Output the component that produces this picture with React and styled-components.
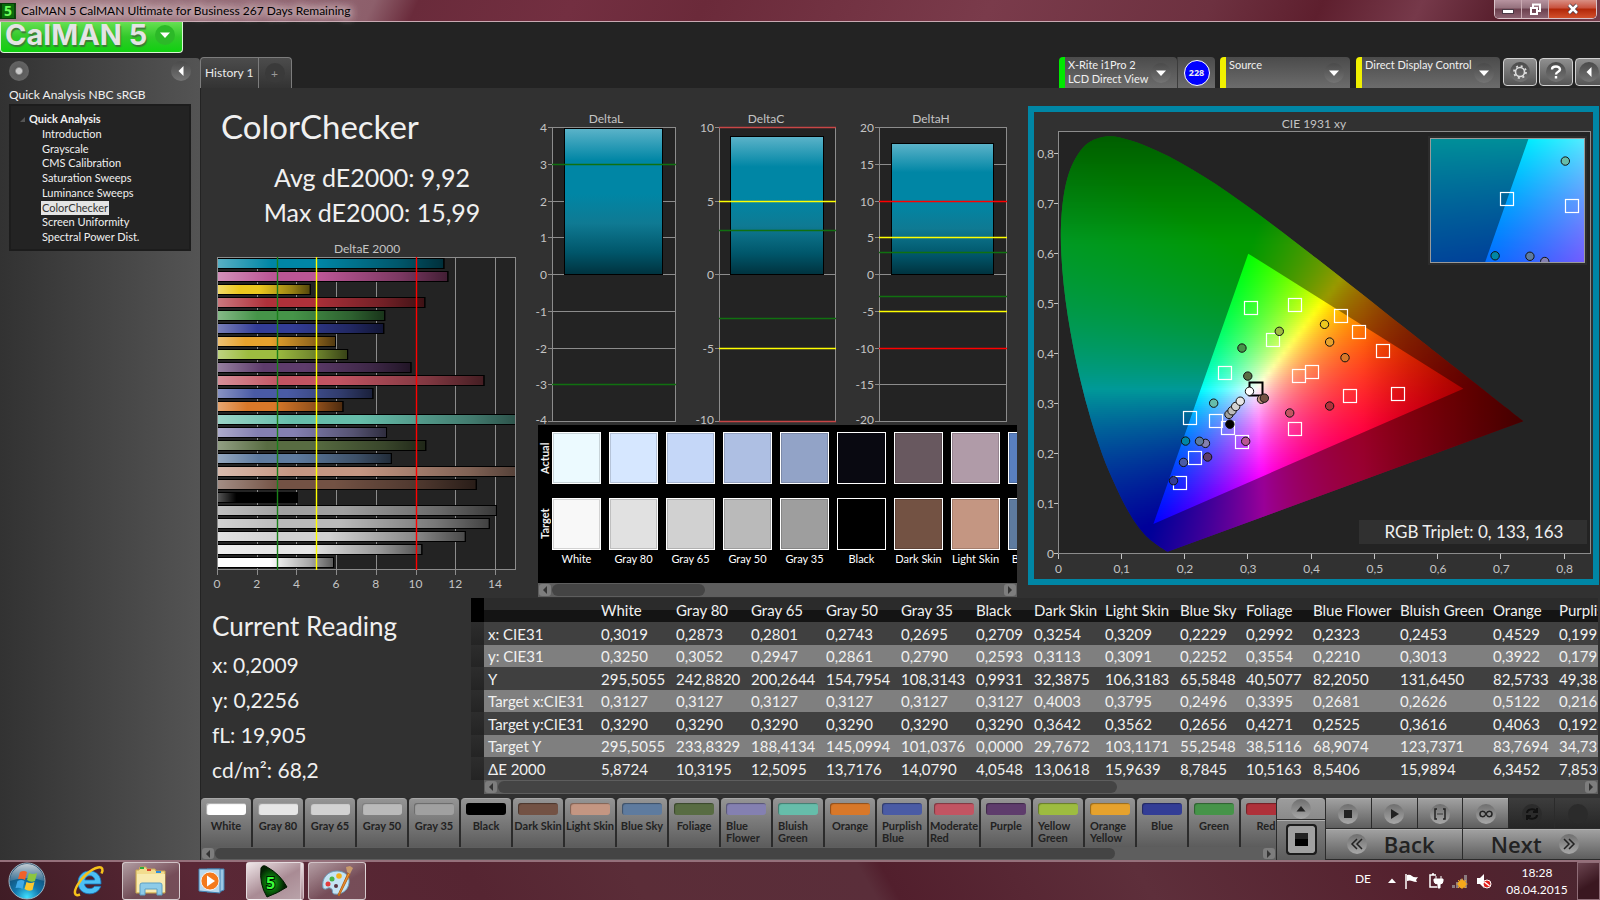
import { useId } from 'react';
import styled, { createGlobalStyle, css } from 'styled-components';

const GlobalStyle = createGlobalStyle`
  * {
    box-sizing: border-box;
  }

  body {
    margin: 0;
    background: #232323;
    color: #f0f0f0;
    font-family: Lato, 'Open Sans', sans-serif;
    font-size: 12px;
  }

  button {
    font: inherit;
    color: inherit;
    padding: 0;
    border: 0;
    background: none;
  }

  h1, h2, p, ul, dl {
    margin: 0;
    padding: 0;
    font-weight: 400;
  }

  ul {
    list-style: none;
  }
`;

/* ---------- data ---------- */

const patches = [
  { name: 'White', color: '#ffffff', dE: 5.8724, x: 0.3019, y: 0.325, tx: 0.3127, ty: 0.329 },
  { name: 'Gray 80', color: '#e6e6e6', dE: 10.3195, x: 0.2873, y: 0.3052 },
  { name: 'Gray 65', color: '#d2d2d2', dE: 12.5095, x: 0.2801, y: 0.2947 },
  { name: 'Gray 50', color: '#bababa', dE: 13.7176, x: 0.2743, y: 0.2861 },
  { name: 'Gray 35', color: '#a0a0a0', dE: 14.079, x: 0.2695, y: 0.279 },
  { name: 'Black', color: '#000000', dE: 4.0548, x: 0.2709, y: 0.2593 },
  { name: 'Dark Skin', color: '#735244', dE: 13.0618, x: 0.3254, y: 0.3113, tx: 0.4003, ty: 0.3642 },
  { name: 'Light Skin', color: '#c49682', dE: 15.9639, x: 0.3209, y: 0.3091, tx: 0.3795, ty: 0.3562 },
  { name: 'Blue Sky', color: '#5e7b9f', dE: 8.7845, x: 0.2229, y: 0.2252, tx: 0.2496, ty: 0.2656 },
  { name: 'Foliage', color: '#586c42', dE: 10.5163, x: 0.2992, y: 0.3554, tx: 0.3395, ty: 0.4271 },
  { name: 'Blue Flower', color: '#8480b1', dE: 8.5406, x: 0.2323, y: 0.221, tx: 0.2681, ty: 0.2525 },
  { name: 'Bluish Green', color: '#66bdaa', dE: 15.9894, x: 0.2453, y: 0.3013, tx: 0.2626, ty: 0.3616 },
  { name: 'Orange', color: '#d97829', dE: 6.3452, x: 0.4529, y: 0.3922, tx: 0.5122, ty: 0.4063 },
  { name: 'Purplish Blue', color: '#4a5ba5', dE: 7.853, x: 0.1976, y: 0.183, tx: 0.216, ty: 0.192 },
  { name: 'Moderate Red', color: '#c25462', dE: 13.45, x: 0.3655, y: 0.2817, tx: 0.4614, ty: 0.315 },
  { name: 'Purple', color: '#5e3c6c', dE: 9.77, x: 0.2357, y: 0.1937, tx: 0.29, ty: 0.2231 },
  { name: 'Yellow Green', color: '#9dbc40', dE: 6.58, x: 0.349, y: 0.4448, tx: 0.3743, ty: 0.4974 },
  { name: 'Orange Yellow', color: '#e6a22d', dE: 5.97, x: 0.4286, y: 0.4234, tx: 0.4743, ty: 0.4429 },
  { name: 'Blue', color: '#333d96', dE: 8.4, x: 0.1818, y: 0.1464, tx: 0.1924, ty: 0.1418 },
  { name: 'Green', color: '#469449', dE: 8.45, x: 0.29, y: 0.4114, tx: 0.3041, ty: 0.4915 },
  { name: 'Red', color: '#af313a', dE: 10.47, x: 0.4286, y: 0.2956, tx: 0.5362, ty: 0.3203 },
  { name: 'Yellow', color: '#ecc81f', dE: 4.7, x: 0.4205, y: 0.4588, tx: 0.4467, ty: 0.4755 },
  { name: 'Magenta', color: '#bb5695', dE: 11.63, x: 0.2959, y: 0.2251, tx: 0.3731, ty: 0.2491 },
  { name: 'Cyan', color: '#0086a5', dE: 11.43, x: 0.2009, y: 0.2256, tx: 0.2085, ty: 0.271 },
];

const actualColors = ['#ecfaff', '#d6e7ff', '#c5d7f8', '#aebfe3', '#92a3c7', '#090911', '#68585f', '#b09ba8', '#5a80c0'];
const targetColors = ['#f8f8f8', '#e1e1e1', '#d1d1d1', '#bababa', '#9e9e9e', '#000000', '#735243', '#c49682', '#5e7b9f'];

const columns = [
  { name: 'White', width: 75, values: ['0,3019', '0,3250', '295,5055', '0,3127', '0,3290', '295,5055', '5,8724'] },
  { name: 'Gray 80', width: 75, values: ['0,2873', '0,3052', '242,8820', '0,3127', '0,3290', '233,8329', '10,3195'] },
  { name: 'Gray 65', width: 75, values: ['0,2801', '0,2947', '200,2644', '0,3127', '0,3290', '188,4134', '12,5095'] },
  { name: 'Gray 50', width: 75, values: ['0,2743', '0,2861', '154,7954', '0,3127', '0,3290', '145,0994', '13,7176'] },
  { name: 'Gray 35', width: 75, values: ['0,2695', '0,2790', '108,3143', '0,3127', '0,3290', '101,0376', '14,0790'] },
  { name: 'Black', width: 58, values: ['0,2709', '0,2593', '0,9931', '0,3127', '0,3290', '0,0000', '4,0548'] },
  { name: 'Dark Skin', width: 71, values: ['0,3254', '0,3113', '32,3875', '0,4003', '0,3642', '29,7672', '13,0618'] },
  { name: 'Light Skin', width: 75, values: ['0,3209', '0,3091', '106,3183', '0,3795', '0,3562', '103,1171', '15,9639'] },
  { name: 'Blue Sky', width: 66, values: ['0,2229', '0,2252', '65,5848', '0,2496', '0,2656', '55,2548', '8,7845'] },
  { name: 'Foliage', width: 67, values: ['0,2992', '0,3554', '40,5077', '0,3395', '0,4271', '38,5116', '10,5163'] },
  { name: 'Blue Flower', width: 87, values: ['0,2323', '0,2210', '82,2050', '0,2681', '0,2525', '68,9074', '8,5406'] },
  { name: 'Bluish Green', width: 93, values: ['0,2453', '0,3013', '131,6450', '0,2626', '0,3616', '123,7371', '15,9894'] },
  { name: 'Orange', width: 66, values: ['0,4529', '0,3922', '82,5733', '0,5122', '0,4063', '83,7694', '6,3452'] },
  { name: 'Purplish Blue', width: 100, values: ['0,1992', '0,1791', '49,3845', '0,2163', '0,1923', '34,7321', '7,8530'] },
];

const rowLabels = ['x: CIE31', 'y: CIE31', 'Y', 'Target x:CIE31', 'Target y:CIE31', 'Target Y', 'ΔE 2000'];

const treeItems = [
  'Introduction',
  'Grayscale',
  'CMS Calibration',
  'Saturation Sweeps',
  'Luminance Sweeps',
  'ColorChecker',
  'Screen Uniformity',
  'Spectral Power Dist.',
];

/* ---------- window frame ---------- */

const Window = styled.div`
  display: flex;
  flex-direction: column;
  min-height: 100vh;
  overflow: hidden;
`;

const TitleBar = styled.header`
  height: 22px;
  display: flex;
  align-items: center;
  gap: 5px;
  border-bottom: 1px solid #c9a9b2;
  background: linear-gradient(115deg, #a58089 0, #8d5f6b 340px, #6a2b3b 380px, #732f41 520px, #6b2a3a 640px, #7a3b4b 900px,
    #6d3140 1100px, #5e1f2e 1200px, #76394a 1290px, #561d2b 1370px, #7a4452 1480px, #5f2c38 1600px);
  color: #000;
`;

const WindowTitle = styled.span`
  font-size: 12px;
  line-height: 20px;
  flex: 1;
  text-shadow: 0 0 8px #e9dadd, 0 0 8px #e9dadd, 0 0 12px #e9dadd;
`;

const WindowControls = styled.div`
  display: flex;
  align-self: flex-start;
  height: 19px;
  margin-right: 3px;
  border: 1px solid #d9c3c9;
  border-top: 0;
  border-radius: 0 0 5px 5px;
  overflow: hidden;
`;

const WindowButton = styled.button`
  width: ${({ $close }) => ($close ? 47 : 27)}px;
  display: grid;
  place-items: center;
  border-right: ${({ $close }) => ($close ? 0 : '1px solid #c9aab2')};
  background: ${({ $close }) =>
    $close
      ? 'linear-gradient(#d98f84, #c8503c 45%, #b12608 50%, #d2502c)'
      : 'linear-gradient(#b794a0, #94707c 45%, #6b3f4d 50%, #8d6472)'};
`;

const Workspace = styled.main`
  flex: 1;
  display: grid;
  grid-template-columns: 200px minmax(0, 1fr);
`;

const Side = styled.div`
  display: flex;
  flex-direction: column;
  gap: 5px;
`;

const LogoButton = styled.button`
  width: 183px;
  height: 31px;
  padding: 0 7px 4px 4px;
  display: flex;
  align-items: center;
  justify-content: space-between;
  border: 1px solid #d9f5d4;
  border-top: 0;
  border-radius: 0 0 4px 4px;
  background: linear-gradient(#66e052, #32c92a 50%, #10d010);
`;

const LogoText = styled.span`
  font-family: Inter, sans-serif;
  font-size: 29px;
  line-height: 26px;
  font-weight: 700;
  color: #e4e4e4;
  text-shadow: 1px 2px 1px #3c7a38;
`;

const SidePanel = styled.aside`
  flex: 1;
  padding: 3px 9px;
  border-radius: 0 4px 0 0;
  background: linear-gradient(90deg, #323232, #545454);
`;

const SideTools = styled.div`
  display: flex;
  justify-content: space-between;
`;

const RoundButton = styled.button`
  width: 20px;
  height: 20px;
  flex: none;
  display: grid;
  place-items: center;
  border-radius: 50%;
  background: ${({ $tone }) => $tone || 'linear-gradient(#4a4a4a, #747474)'};
`;

const WorkflowTitle = styled.h2`
  margin-top: 4px;
  font-size: 12px;
  line-height: 20px;
`;

const Tree = styled.nav`
  height: 147px;
  margin-top: -1px;
  padding: 5px 0 0 9px;
  border: 2px solid #1c1c1c;
  background: #232323;
  font-size: 11px;
`;

const TreeRoot = styled.div`
  display: flex;
  align-items: center;
  gap: 4px;
  line-height: 16px;
  font-weight: 700;
`;

const TreeList = styled.ul`
  height: 117px;
  padding-left: 21px;
  display: flex;
  flex-direction: column;
  justify-content: space-between;
`;

const TreeLink = styled.a`
  display: inline-block;
  padding: 0 1px;
  line-height: 14px;
  text-decoration: none;
  color: ${({ $active }) => ($active ? '#333' : '#f0f0f0')};
  background: ${({ $active }) => ($active ? '#e4e4e4' : 'none')};
`;

/* ---------- top strip ---------- */

const Stage = styled.div`
  display: flex;
  flex-direction: column;
  min-width: 0;
`;

const TopStrip = styled.div`
  height: 66px;
  display: flex;
  align-items: flex-end;
  justify-content: space-between;
  overflow: hidden;
`;

const Tabs = styled.div`
  display: flex;
  height: 31px;
  border: 1px solid #7c7c7c;
  border-bottom: 0;
  border-radius: 4px 4px 0 0;
  background: linear-gradient(#4c4c4c, #333);
`;

const Tab = styled.button`
  padding: 0 4px 2px;
  border-right: 1px solid #7c7c7c;
  font-size: 12px;
  color: #eaeaea;
`;

const AddTab = styled.button`
  width: 32px;
  display: grid;
  place-items: center;
  color: #999;
`;

const Devices = styled.div`
  display: flex;
  align-items: flex-end;
  margin-right: -11px;
`;

const DeviceButton = styled.button`
  width: ${({ $width }) => $width}px;
  height: 31px;
  margin-right: ${({ $gap }) => $gap}px;
  padding: 0 6px 0 3px;
  display: flex;
  align-items: center;
  justify-content: space-between;
  border-left: 6px solid ${({ $mark }) => $mark};
  border-radius: 4px 4px 0 0;
  background: linear-gradient(#4b4b4b, #6c6c6c);
  text-align: left;
  line-height: 14px;
  font-size: 11px;
`;

const DeviceName = styled.span`
  align-self: flex-start;
  padding-top: 1px;
  white-space: nowrap;
`;

const Meter = styled.div`
  width: 38px;
  height: 31px;
  margin: 0 5px 0 0;
  display: grid;
  place-items: center;
  border-left: 1px solid #3c3c3c;
  border-radius: 0 4px 0 0;
  background: linear-gradient(#4b4b4b, #6c6c6c);
`;

const MeterCount = styled.span`
  width: 26px;
  height: 26px;
  display: grid;
  place-items: center;
  border: 1px solid #fff;
  border-radius: 50%;
  background: #00f;
  font: 700 9px 'Open Sans', sans-serif;
`;

const SquareButton = styled.button`
  width: 34px;
  height: 28px;
  margin: 0 2px 2px 0;
  padding-right: ${({ $cut }) => ($cut ? 6 : 0)}px;
  flex: none;
  display: grid;
  place-items: center;
  border: 1px solid #d0d0d0;
  border-radius: 4px;
  background: linear-gradient(#8f8f8f, #555);
`;

/* ---------- content ---------- */

const Content = styled.div`
  flex: 1;
  display: flex;
  flex-direction: column;
  border-left: 1px solid #232323;
  background: #313131;
  min-width: 0;
`;

const Upper = styled.div`
  display: grid;
  grid-template-columns: minmax(0, 324fr) minmax(0, 503fr) minmax(0, 572fr);
  align-items: start;
  min-height: 510px;
`;

const Summary = styled.section`
  padding-top: 16px;
`;

const PageTitle = styled.h1`
  padding-left: 20px;
  font-size: 33px;
  line-height: 44px;
`;

const Stats = styled.div`
  margin: 12px 0 8px;
  padding-left: 18px;
  text-align: center;
  font-size: 25px;
  line-height: 35px;
`;

const Chart = styled.svg`
  display: block;
  width: 100%;
  height: auto;
  overflow: visible;
  font-size: 12px;
  fill: #c4c4c4;
`;

const Middle = styled.section`
  padding-top: 22px;
`;

const DeltaRow = styled.div`
  display: grid;
  grid-template-columns: minmax(0, 160fr) minmax(0, 160fr) minmax(0, 170fr);
  padding: 0 8px 0 5px;
`;

const SwatchPanel = styled.div`
  margin: 0 11px 0 13px;
  overflow: hidden;
`;

const SwatchArea = styled.div`
  height: 158px;
  padding-top: 7px;
  display: flex;
  flex-direction: column;
  gap: 14px;
  background: #000;
`;

const SwatchRow = styled.div`
  display: flex;
  gap: 8px;
`;

const RowName = styled.span`
  width: 14px;
  height: 52px;
  margin-right: -8px;
  flex: none;
  writing-mode: vertical-rl;
  transform: rotate(180deg);
  text-align: center;
  line-height: 14px;
  font-size: 11px;
  font-weight: 700;
`;

const SwatchCell = styled.figure`
  width: 49px;
  margin: 0;
  flex: none;
  display: flex;
  flex-direction: column;
  align-items: center;
`;

const Swatch = styled.div`
  width: 49px;
  height: 52px;
  flex: none;
  border: 1px solid #fff;
  box-shadow: inset 0 0 0 1px rgba(0, 0, 0, 0.15);
  background: ${({ $color }) => $color};
`;

const SwatchLabel = styled.figcaption`
  font-size: 11px;
  line-height: 17px;
  white-space: nowrap;
  color: #fff;
`;

const ScrollTrack = styled.div`
  height: ${({ $height }) => $height}px;
  padding: 1px;
  display: flex;
  background: #5e5e5e;
`;

const ScrollArrow = styled.button`
  width: 12px;
  flex: none;
  display: grid;
  place-items: center;
  border-radius: 3px;
  background: #7d7d7d;
`;

const ScrollLane = styled.div`
  flex: 1;
  margin: 0 1px;
`;

const ScrollThumb = styled.div`
  width: ${({ $size }) => $size}%;
  height: 100%;
  border-radius: 6px;
  background: #444;
`;

const CiePanel = styled.section`
  margin: 18px 1px 0 0;
  border: 6px solid #0086a5;
`;

/* ---------- readings + table ---------- */

const Lower = styled.div`
  display: grid;
  grid-template-columns: minmax(0, 270fr) minmax(0, 1129fr);
  min-height: 200px;
`;

const Reading = styled.section`
  padding: 8px 0 0 11px;
  font-size: 21px;
  line-height: 35px;
`;

const ReadingTitle = styled.h2`
  font-size: 26px;
  line-height: 41px;
`;

const TableBox = styled.div`
  margin-right: 2px;
  overflow: hidden;
`;

const Table = styled.table`
  width: 1172px;
  table-layout: fixed;
  border-collapse: collapse;
  text-align: left;
  font-size: 15px;

  th, td {
    padding: 0 0 0 4px;
    font-weight: 400;
    white-space: nowrap;
  }

  thead th {
    height: 24px;
    background: linear-gradient(#2b2b2b 50%, #141414 52%);
  }

  tbody tr {
    height: 23px;
    background: #404040;
  }

  tbody tr:nth-child(even) {
    height: 22px;
    background: #7f7f7f;
  }

  tbody td:first-child {
    padding: 0;
    background: linear-gradient(#2d2d2d, #242424);
  }

  thead th:first-child {
    background: #000;
  }
`;

const TableScroll = styled.div`
  padding-left: 13px;
`;

/* ---------- bottom strip ---------- */

const BottomStrip = styled.div`
  height: 62px;
  display: flex;
  background: #2b2b2b;
`;

const PatchArea = styled.div`
  flex: 1;
  min-width: 0;
  overflow: hidden;
`;

const PatchRow = styled.div`
  display: flex;
  gap: 2px;
  overflow: hidden;
`;

const PatchButton = styled.button`
  width: 50px;
  height: 49px;
  flex: none;
  padding-top: 4px;
  display: flex;
  flex-direction: column;
  align-items: center;
  justify-content: flex-start;
  gap: 5px;
  border-top: 1px solid #a8a8a8;
  border-radius: 4px 4px 0 0;
  background: linear-gradient(#949494, #5c5c5c);
  color: #222;
  font-size: 11px;
  font-weight: 700;
  line-height: 12px;
  text-align: left;
`;

const Chip = styled.span`
  width: 40px;
  height: 12px;
  flex: none;
  border-radius: 3px;
  background: ${({ $color }) => $color};
  box-shadow: inset 1px 1px 1px rgba(0, 0, 0, 0.35);
`;

const PatchName = styled.span`
  max-width: ${({ $wide }) => ($wide ? '50px' : '40px')};
  white-space: ${({ $wide }) => ($wide ? 'pre-line' : 'normal')};
`;

const controlFace = css`
  display: flex;
  align-items: center;
  justify-content: center;
  border-top: 1px solid #b0b0b0;
  background: linear-gradient(#a0a0a0, #5e5e5e);
  color: #222;
`;

const PatternColumn = styled.div`
  width: 48px;
  margin: 0 1px;
  display: flex;
  flex-direction: column;
  gap: 1px;
`;

const PatternButton = styled.button`
  ${controlFace}
  flex: ${({ $tall }) => ($tall ? 'none' : 1)};
  height: ${({ $tall }) => ($tall ? '43px' : 'auto')};
  padding-bottom: ${({ $tall }) => ($tall ? 5 : 0)}px;
  border-radius: ${({ $tall }) => ($tall ? '0 0 4px 4px' : '4px 4px 0 0')};
  background: ${({ $tall }) => ($tall ? 'linear-gradient(#808080, #5a5a5a)' : 'linear-gradient(#9c9c9c, #8a8a8a)')};
`;

const PatternIcon = styled.span`
  width: 31px;
  height: 31px;
  border: 2px solid #1c1c1c;
  border-radius: 4px;
  box-shadow: inset 0 0 0 7px #a0a0a0;
  background: linear-gradient(#222 50%, #000 50%);
`;

const Controls = styled.div`
  width: 274px;
  display: grid;
  grid-template-columns: repeat(6, 1fr);
  grid-template-rows: 30px 30px;
  gap: 1px;
`;

const ControlButton = styled.button`
  ${controlFace}
  ${({ disabled }) => disabled && 'background: linear-gradient(#3c3c3c, #262626); border-top-color: #3c3c3c;'}
`;

const NavButton = styled.button`
  ${controlFace}
  grid-column: span 3;
  gap: 17px;
  padding: ${({ $side }) => ($side === 'left' ? '0 7px 2px 0' : '0 0 2px 6px')};
  font: 600 22px 'Open Sans', sans-serif;
`;

/* ---------- taskbar ---------- */

const Taskbar = styled.footer`
  height: 40px;
  display: flex;
  align-items: center;
  border-top: 2px solid #95707b;
  background: linear-gradient(60deg, #3f1c25, #5a2836 180px, #562532 420px, #5b2d38 560px, #5a2e3a 760px, #521f2d 780px,
    #5e2f3b 1000px, #54212e 1240px, #4c2630 1380px, #3a1720 1600px);
`;

const TaskSlot = styled.button`
  width: ${({ $width }) => $width}px;
  height: 38px;
  margin-right: ${({ $gap = 0 }) => $gap}px;
  display: grid;
  place-items: center;
  ${({ $open }) => $open && css`
    border: 1px solid rgba(255, 255, 255, 0.65);
    border-radius: 3px;
    background: linear-gradient(150deg, rgba(255, 255, 255, 0.55), rgba(255, 255, 255, 0.18) 60%);
  `}
  ${({ $active }) => $active && css`
    border-right: 4px double #d5c0c6;
    background: linear-gradient(150deg, #efe6e8, #a98b94 55%, #b9a2a9);
  `}
`;

const Tray = styled.div`
  margin-left: auto;
  height: 38px;
  display: flex;
  align-items: center;
  gap: 8px;
  font-size: 12px;
  color: #fff;
`;

const Language = styled.span`
  margin: -6px 9px 0 0;
`;

const Clock = styled.time`
  width: 64px;
  margin-left: 5px;
  text-align: center;
  line-height: 17px;
`;

const ShowDesktop = styled.button`
  width: 23px;
  height: 38px;
  border: 1px solid #8f6d77;
  background: linear-gradient(150deg, #6b4550, #3a1720 60%);
`;

/* ---------- small parts ---------- */

const Triangle = ({ dir = 'down', size = 10, color = '#fff' }) => {
  const paths = { down: 'M0 2.5h10L5 8z', left: 'M7.5 0v10L2.5 5z', right: 'M2.5 0v10L7.5 5z', up: 'M0 7.5h10L5 2z' };
  return (
    <svg width={size} height={size} viewBox="0 0 10 10" aria-hidden="true">
      <path d={paths[dir]} fill={color} />
    </svg>
  );
};

const ScrollBar = ({ size, height }) => (
  <ScrollTrack $height={height}>
    <ScrollArrow aria-label="Scroll left"><Triangle dir="left" size={8} color="#333" /></ScrollArrow>
    <ScrollLane><ScrollThumb $size={size} /></ScrollLane>
    <ScrollArrow aria-label="Scroll right"><Triangle dir="right" size={8} color="#333" /></ScrollArrow>
  </ScrollTrack>
);

/* ---------- charts ---------- */

const DeltaEChart = () => {
  const left = 16;
  const right = 314;
  const top = 19;
  const bottom = 332;
  const unit = 19.85;
  const ticks = [0, 2, 4, 6, 8, 10, 12, 14];
  const limits = [[3, '#1a801a'], [5, '#ffff00'], [10, '#ff0000']];

  return (
    <Chart viewBox="0 0 324 359" role="img" aria-label="DeltaE 2000">
      <defs>
        <linearGradient id="gloss-x">
          <stop offset="0" stopColor="#fff" stopOpacity="0.35" />
          <stop offset="0.24" stopColor="#fff" stopOpacity="0" />
        </linearGradient>
        <linearGradient id="shade-x">
          <stop offset="0.45" stopColor="#000" stopOpacity="0" />
          <stop offset="0.8" stopColor="#000" stopOpacity="0.35" />
          <stop offset="1" stopColor="#000" stopOpacity="0.65" />
        </linearGradient>
        <clipPath id="de-plot"><rect x={left} y={top} width={right - left} height={bottom - top} /></clipPath>
      </defs>
      <text x="166" y="15" textAnchor="middle">DeltaE 2000</text>
      <rect x={left} y={top} width={right - left} height={bottom - top} fill="#232323" />
      {ticks.map((t) => (
        <g key={t}>
          <path d={`M${Math.round(left + t * unit) + 0.5} ${top}V${bottom + 5}`} stroke="#8c8c8c" />
          <text x={left + t * unit} y={bottom + 18} textAnchor="middle">{t}</text>
        </g>
      ))}
      <g clipPath="url(#de-plot)">
        {[...patches].reverse().map((p, i) => {
          const box = { x: left, y: top + 1.5 + i * 13, width: p.dE * unit, height: 10 };
          return (
            <g key={p.name}>
              <rect {...box} fill={p.color} stroke="#000" />
              <rect {...box} fill="url(#gloss-x)" />
              <rect {...box} fill="url(#shade-x)" stroke="#000" />
            </g>
          );
        })}
      </g>
      <rect x={left + 0.5} y={top + 0.5} width={right - left} height={bottom - top - 1} fill="none" stroke="#8c8c8c" />
      {limits.map(([v, color]) => (
        <path key={v} d={`M${Math.round(left + v * unit) + 0.5} ${top}V${bottom}`} stroke={color} strokeWidth="1.4" />
      ))}
    </Chart>
  );
};

const DeltaChart = ({ title, titleX, width, left, right, barInset, max, step, value, limits }) => {
  const zero = 164.5;
  const scale = 147 / max;
  const toY = (v) => Math.round(zero - v * scale - 0.5) + 0.5;
  const ticks = [];
  for (let v = max; v >= -max; v -= step) ticks.push(v);
  const bar = { x: left + barInset - 0.5, y: toY(value), width: right - left - barInset * 2, height: zero - toY(value) };
  const id = useId();

  return (
    <Chart viewBox={`0 0 ${width} 315`} role="img" aria-label={title}>
      <defs>
        <linearGradient id={id} x2="0" y2="1">
          <stop offset="0" stopColor="#5cb3c9" />
          <stop offset="0.22" stopColor="#0086a5" />
          <stop offset="0.45" stopColor="#0086a5" />
          <stop offset="0.65" stopColor="#0f7a93" />
          <stop offset="0.85" stopColor="#00566a" />
          <stop offset="1" stopColor="#00323e" />
        </linearGradient>
      </defs>
      <text x={titleX} y="13" textAnchor="middle">{title}</text>
      <rect x={left} y={toY(max)} width={right - left} height="294" fill="#232323" />
      {ticks.map((v) => (
        <g key={v}>
          <path d={`M${left - 4} ${toY(v)}H${right}`} stroke="#8c8c8c" />
          <text x={left - 5} y={Math.min(Math.round(toY(v)) + 4, 314)} textAnchor="end">{v}</text>
        </g>
      ))}
      <rect {...bar} fill={`url(#${id})`} stroke="#000" />
      <rect x={left + 0.5} y={toY(max)} width={right - left - 1} height="294" fill="none" stroke="#8c8c8c" />
      {limits.map(([v, color]) => (
        <path key={v} d={`M${left} ${toY(v)}H${right}`} stroke={color} strokeWidth="1.4" />
      ))}
    </Chart>
  );
};

/* spectral locus, 400 nm - 700 nm */
const locus = [
  [0.1733, 0.0048], [0.1726, 0.0048], [0.1714, 0.0051], [0.1689, 0.0069], [0.1644, 0.0109], [0.1566, 0.0177],
  [0.144, 0.0297], [0.1355, 0.0399], [0.1241, 0.0578], [0.1096, 0.0868], [0.0913, 0.1327], [0.0687, 0.2007],
  [0.0454, 0.295], [0.0235, 0.4127], [0.0082, 0.5384], [0.0039, 0.6548], [0.0139, 0.7502], [0.0389, 0.812],
  [0.0743, 0.8338], [0.1142, 0.8262], [0.1547, 0.8059], [0.1929, 0.7816], [0.2296, 0.7543], [0.2658, 0.7243],
  [0.3016, 0.6923], [0.3373, 0.6589], [0.3731, 0.6245], [0.4087, 0.5896], [0.4441, 0.5547], [0.4788, 0.5202],
  [0.5125, 0.4866], [0.5448, 0.4544], [0.5752, 0.4242], [0.6029, 0.3965], [0.627, 0.3725], [0.6482, 0.3514],
  [0.6658, 0.334], [0.6915, 0.3083], [0.7079, 0.292], [0.719, 0.2809], [0.726, 0.274], [0.7347, 0.2653],
];
const gamut = [[0.64, 0.33], [0.3, 0.6], [0.15, 0.06]];

const xyColor = (x, y) => {
  const z = 1 - x - y;
  const rgb = [
    3.2406 * x - 1.5372 * y - 0.4986 * z,
    -0.9689 * x + 1.8758 * y + 0.0415 * z,
    0.0557 * x - 0.204 * y + 1.057 * z,
  ].map((v) => Math.max(v, 0));
  const peak = Math.max(...rgb) || 1;
  const redFade = Math.max(0, x - 0.48) * 2.2;
  const greenFade = Math.max(0, y - 0.62) * 1.8;
  const level = 255 * (1 - Math.min(0.6, redFade + greenFade));
  return `rgb(${rgb.map((v) => Math.round((v / peak) * level)).join(',')})`;
};

/* smooth path through the points (Catmull-Rom) */
const curve = (pts) => {
  let d = `M${pts[0]}`;
  for (let i = 0; i < pts.length - 1; i += 1) {
    const [p0, p1, p2, p3] = [pts[i - 1] || pts[i], pts[i], pts[i + 1], pts[i + 2] || pts[i + 1]];
    d += `C${p1[0] + (p2[0] - p0[0]) / 6} ${p1[1] + (p2[1] - p0[1]) / 6} ${p2[0] - (p3[0] - p1[0]) / 6} ${p2[1] - (p3[1] - p1[1]) / 6} ${p2}`;
  }
  return `${d}Z`;
};

const Diagram = ({ id, left, top, right, bottom, x0, y0, sx, sy, row, step, marks }) => {
  const px = (x) => x0 + x * sx;
  const py = (y) => y0 - y * sy;
  const rows = [];
  for (let y = top; y < bottom; y += row) rows.push(y);
  const stops = [];
  for (let x = left; x <= right; x += step) stops.push(x);
  const locusPath = curve(locus.map(([x, y]) => [px(x), py(y)]));
  const gamutPath = `M${gamut.map(([x, y]) => [px(x), py(y)]).join('L')}Z`;

  return (
    <g clipPath={`url(#${id}-frame)`}>
      <clipPath id={`${id}-frame`}><rect x={left} y={top} width={right - left} height={bottom - top} /></clipPath>
      <clipPath id={`${id}-locus`}><path d={locusPath} /></clipPath>
      <g clipPath={`url(#${id}-locus)`}>
        {rows.map((y) => (
          <g key={y}>
            <linearGradient id={`${id}-${y}`} gradientUnits="userSpaceOnUse" x1={left} x2={right} y1="0" y2="0">
              {stops.map((x) => (
                <stop
                  key={x}
                  offset={(x - left) / (right - left)}
                  stopColor={xyColor((x - x0) / sx, (y0 - y - row / 2) / sy)}
                />
              ))}
            </linearGradient>
            <rect x={left} y={y} width={right - left} height={row} fill={`url(#${id}-${y})`} shapeRendering="crispEdges" />
          </g>
        ))}
        <path d={`M${left} ${top}H${right}V${bottom}H${left}Z${gamutPath}`} fillRule="evenodd" fill="#000" opacity="0.4" />
      </g>
      {marks.filter((p) => p.tx).map((p) => (
        <rect
          key={p.name}
          x={Math.round(px(p.tx)) - 6.5}
          y={Math.round(py(p.ty)) - 6.5}
          width="13"
          height="13"
          fill="none"
          stroke={p.name === 'White' ? '#000' : '#fff'}
          strokeWidth={p.name === 'White' ? 2 : 1.2}
        />
      ))}
      {[...marks].reverse().map((p) => (
        <circle key={p.name} cx={px(p.x)} cy={py(p.y)} r="4.2" fill={p.color} stroke="#111" />
      ))}
    </g>
  );
};

const CieChart = () => {
  const x0 = 24.5;
  const y0 = 442;
  const sx = 632.6;
  const sy = 500.6;
  const ticks = [0, 1, 2, 3, 4, 5, 6, 7, 8];
  const label = (t) => (t ? `0,${t}` : '0');

  return (
    <Chart viewBox="0 0 559 467" role="img" aria-label="CIE 1931 xy">
      <text x="280" y="16" textAnchor="middle">CIE 1931 xy</text>
      <rect x="24.5" y="19.5" width="532" height="422" fill="#232323" stroke="#8c8c8c" />
      <Diagram id="cie" left={25} top={20} right={520} bottom={442} x0={x0} y0={y0} sx={sx} sy={sy} row={2} step={5} marks={patches} />
      {ticks.map((t) => (
        <g key={t}>
          <path d={`M${Math.round(x0 + t * sx / 10) - 0.5} 442v5M20 ${Math.round(y0 - t * sy / 10) - 0.5}h4`} stroke="#c4c4c4" />
          <text x={x0 + t * sx / 10} y="461" textAnchor="middle">{label(t)}</text>
          <text x="20" y={y0 - t * sy / 10 + 4} textAnchor="end">{label(t)}</text>
        </g>
      ))}
      <rect x="394" y="24" width="159" height="129" fill="#2c2c2c" />
      <Diagram id="inset" left={396} top={26} right={550} bottom={151} x0={143.5} y0={426} sx={1581} sy={1251} row={1} step={7} marks={patches} />
      <rect x="396.5" y="26.5" width="154" height="124" fill="none" stroke="#9a9a9a" />
      <rect x="325" y="408" width="228" height="24" fill="#303030" />
      <text x="440" y="426" textAnchor="middle" fontSize="17" fill="#f0f0f0">RGB Triplet: 0, 133, 163</text>
    </Chart>
  );
};

/* ---------- icons ---------- */

const StartOrb = () => (
  <svg width="38" height="38" viewBox="0 0 38 38" aria-hidden="true">
    <defs>
      <radialGradient id="orb" cx="0.5" cy="0.95" r="0.9">
        <stop offset="0" stopColor="#3fe0ff" />
        <stop offset="0.4" stopColor="#1277ad" />
        <stop offset="1" stopColor="#123a5c" />
      </radialGradient>
      <linearGradient id="orb-shine" x2="0" y2="1">
        <stop offset="0" stopColor="#fff" stopOpacity="0.75" />
        <stop offset="1" stopColor="#fff" stopOpacity="0.15" />
      </linearGradient>
    </defs>
    <circle cx="19" cy="19" r="18" fill="url(#orb)" stroke="#9fb6c4" />
    <path d="M2 19a17 17 0 0 1 34 0q-17-6-34 0z" fill="url(#orb-shine)" />
    <path d="M12 10q4-2 7 0l-2 8q-3-2-7-1z" fill="#f0612a" />
    <path d="M21 11q4 2 8 0l-2 8q-4 2-8-1z" fill="#8cc63f" />
    <path d="M9.5 19q4-2 7 0l-2 8q-3-2-7-1z" fill="#3fa9e8" />
    <path d="M18.5 20q4 2 8 0l-2 8q-4 2-8-1z" fill="#fcc82e" />
  </svg>
);

const ExplorerE = () => (
  <svg width="32" height="32" viewBox="0 0 32 32" aria-hidden="true">
    <path d="M28 19H11.5c.3 3 2.3 4.6 5.2 4.6 2.2 0 3.8-.8 4.8-2.3h6.2C26.2 26 22 28.8 16.6 28.8 9.8 28.8 5 24.2 5 17.5S9.9 6 16.7 6 28.4 11 28 19zM11.8 15h10c-.4-2.7-2.2-4.3-5-4.3-2.7 0-4.5 1.6-5 4.3z" fill="#4cc0f4" stroke="#1577c0" strokeWidth="0.8" />
    <path d="M7 29.5C1 32 .5 27 4.5 20 9 12 18 4 25 2.5c4.5-1 5.5 2 3.5 6" fill="none" stroke="#f7c21a" strokeWidth="2.5" />
  </svg>
);

const FolderIcon = () => (
  <svg width="34" height="32" viewBox="0 0 34 32" aria-hidden="true">
    <path d="M2 5h3l1-3h6l1 2h8l1 2h9v22H2z" fill="#f2dc8e" stroke="#c8a850" />
    <rect x="6" y="2" width="4" height="2" fill="#2cab3c" />
    <rect x="13" y="4" width="4" height="2" fill="#d9412a" />
    <rect x="22" y="6" width="5" height="2" fill="#2c8ede" />
    <path d="M3 9h28v18H3z" fill="#f8eab0" />
    <path d="M6 30V20q0-2 2-2h18q2 0 2 2v10h-5v-6H11v6z" fill="#8dcbe8" stroke="#5d9fc4" />
  </svg>
);

const MediaIcon = () => (
  <svg width="28" height="28" viewBox="0 0 28 28" aria-hidden="true">
    <path d="M9 2h17v21l-5 2H9z" fill="#9cc7e4" stroke="#4384b4" />
    <path d="M1 2h21v24L1 24z" fill="#b9d9ee" stroke="#4384b4" />
    <circle cx="12" cy="14" r="9" fill="#f47a1c" stroke="#fff" strokeWidth="0.8" />
    <path d="M9 8.5v11l8-5.5z" fill="#fff" />
  </svg>
);

const CalmanIcon = () => (
  <svg width="32" height="34" viewBox="0 0 32 34" aria-hidden="true">
    <defs>
      <radialGradient id="calman" cx="0.4" cy="0.55" r="0.5">
        <stop offset="0" stopColor="#19c819" />
        <stop offset="0.5" stopColor="#0a6a0a" />
        <stop offset="1" stopColor="#022202" />
      </radialGradient>
    </defs>
    <path d="M3 4Q5 0 9 3 22 10 29 23 20 29 9 33 1 20 3 4z" fill="url(#calman)" stroke="#001800" />
    <text x="8" y="25" fontFamily="Open Sans" fontSize="16" fontWeight="700" fill="#39ff39" stroke="#001500" strokeWidth="2" paintOrder="stroke">5</text>
  </svg>
);

const PaintIcon = () => (
  <svg width="34" height="34" viewBox="0 0 34 34" aria-hidden="true">
    <path d="M3 24C1 14 8 7 17 7c8 0 13 5 12 12-1 8-8 12-15 11-3-1 0-5-4-6-3-1-4 3-7 0z" fill="#c5e4f4" stroke="#6d9cb8" />
    <circle cx="8" cy="20" r="2.5" fill="#e23c3c" />
    <circle cx="12" cy="15" r="2.5" fill="#46b446" />
    <circle cx="19" cy="12" r="2.8" fill="#f4b01c" />
    <circle cx="16" cy="22" r="2" fill="#5a3440" />
    <path d="M28 9l2 1-11 22-1-1z" fill="#f09030" stroke="#b86414" />
    <path d="M26 3l4-1 3 2-3 6-3-2z" fill="#c89a6c" />
  </svg>
);

const controlIcons = [
  { label: 'Stop', art: <rect x="6" y="6" width="8" height="8" fill="#222" /> },
  { label: 'Play', art: <path d="M7 5v10l8-5z" fill="#222" /> },
  { label: 'Read range', art: <path d="M7 5H5v10h2M13 5h2v10h-2M7.5 10h1M9.5 10h1M11.5 10h1" fill="none" stroke="#222" strokeWidth="1.5" /> },
  { label: 'Read continuously', art: <path d="M10 10c-2-4-6-3-6 0s4 4 6 0 6-3 6 0-4 4-6 0z" fill="none" stroke="#222" strokeWidth="1.5" /> },
  { label: 'Refresh', off: true, art: <path d="M5 9c0-4 7-5 9-2M15 4v4h-4M15 11c0 4-7 5-9 2M5 16v-4h4" fill="none" stroke="#111" strokeWidth="2" /> },
  { label: 'Record', off: true, art: null },
];

const ControlIcon = ({ art, off }) => (
  <svg width="20" height="20" viewBox="0 0 20 20" aria-hidden="true">
    <defs>
      <linearGradient id="knob" x2="0" y2="1">
        <stop offset="0" stopColor="#6f6f6f" />
        <stop offset="1" stopColor="#a8a8a8" />
      </linearGradient>
    </defs>
    <circle cx="10" cy="10" r="10" fill={off ? '#2b2b2b' : 'url(#knob)'} />
    {art}
  </svg>
);

const GearIcon = () => (
  <svg width="16" height="16" viewBox="0 0 16 16" aria-hidden="true">
    <circle cx="8" cy="8" r="4.5" fill="none" stroke="#ddd" strokeWidth="1.6" />
    <circle cx="8" cy="8" r="6" fill="none" stroke="#ddd" strokeWidth="1.8" strokeDasharray="2 2.71" />
  </svg>
);

const TrayIcons = () => (
  <>
    <Triangle dir="up" size={8} />
    <svg width="16" height="16" viewBox="0 0 16 16" aria-hidden="true">
      <path d="M2 1v15" stroke="#fff" strokeWidth="1.5" />
      <path d="M3 2q3-1 5 1t6 1l-2 3 1 2q-3 0-5-1T3 8z" fill="#fff" />
    </svg>
    <svg width="16" height="16" viewBox="0 0 16 16" aria-hidden="true">
      <path d="M8 2H2v12h7M4 1h2" fill="none" stroke="#fff" strokeWidth="1.5" />
      <path d="M6 6h9v2q0 3-3 3v4h-2v-4Q6 11 6 8zM8 3v3M13 3v3" fill="#fff" stroke="#fff" />
    </svg>
    <svg width="16" height="16" viewBox="0 0 16 16" aria-hidden="true">
      <path d="M0 12h3v3H0zM4 9h3v6H4zM8 6h3v9H8zM12 2h3v13h-3z" fill="#8b7b80" />
      <circle cx="10" cy="11" r="4" fill="#f7a81b" />
      <path d="M10 5.5v11M4.5 11h11M6 7l8 8M14 7l-8 8" stroke="#f7a81b" />
    </svg>
    <svg width="16" height="16" viewBox="0 0 16 16" aria-hidden="true">
      <path d="M1 5h3l4-4v14l-4-4H1z" fill="#fff" />
      <circle cx="11" cy="11" r="4" fill="#e0201c" stroke="#fff" />
      <path d="M8.5 9l5 4" stroke="#fff" strokeWidth="1.5" />
    </svg>
  </>
);

/* ---------- sections ---------- */

const SideBar = () => (
  <Side>
    <LogoButton aria-label="CalMAN menu">
      <LogoText>CalMAN 5</LogoText>
      <RoundButton as="span" $tone="#2cb928"><Triangle /></RoundButton>
    </LogoButton>
    <SidePanel>
      <SideTools>
        <RoundButton aria-label="Options" $tone="radial-gradient(#c8c8c8 18%, #5c5c5c 30%, #6a6a6a)" />
        <RoundButton aria-label="Collapse"><Triangle dir="left" /></RoundButton>
      </SideTools>
      <WorkflowTitle>Quick Analysis NBC sRGB</WorkflowTitle>
      <Tree>
        <TreeRoot>
          <svg width="5" height="5" viewBox="0 0 5 5" aria-hidden="true"><path d="M5 0v5H0z" fill="#555" /></svg>
          Quick Analysis
        </TreeRoot>
        <TreeList>
          {treeItems.map((item) => (
            <li key={item}><TreeLink href="#" $active={item === 'ColorChecker'}>{item}</TreeLink></li>
          ))}
        </TreeList>
      </Tree>
    </SidePanel>
  </Side>
);

const Toolbar = () => (
  <TopStrip>
    <Tabs>
      <Tab>History 1</Tab>
      <AddTab aria-label="Add tab"><RoundButton as="span" $tone="#3a3a3a">+</RoundButton></AddTab>
    </Tabs>
    <Devices>
      <DeviceButton $width={118} $gap={0} $mark="#00e800">
        <DeviceName>X-Rite i1Pro 2<br />LCD Direct View</DeviceName>
        <RoundButton as="span"><Triangle /></RoundButton>
      </DeviceButton>
      <Meter><MeterCount>228</MeterCount></Meter>
      <DeviceButton $width={130} $gap={6} $mark="#f0f000">
        <DeviceName>Source</DeviceName>
        <RoundButton as="span"><Triangle /></RoundButton>
      </DeviceButton>
      <DeviceButton $width={144} $gap={3} $mark="#f0f000">
        <DeviceName>Direct Display Control</DeviceName>
        <RoundButton as="span"><Triangle /></RoundButton>
      </DeviceButton>
      <SquareButton aria-label="Settings"><RoundButton as="span"><GearIcon /></RoundButton></SquareButton>
      <SquareButton aria-label="Help">
        <RoundButton as="span">
          <svg width="12" height="14" viewBox="0 0 12 14" aria-hidden="true">
            <path d="M2 4.5c0-4 8-4 8 0 0 2.5-4 2-4 5M6 11v2.5" fill="none" stroke="#fff" strokeWidth="2.4" />
          </svg>
        </RoundButton>
      </SquareButton>
      <SquareButton $cut aria-label="Collapse toolbar"><RoundButton as="span"><Triangle dir="left" /></RoundButton></SquareButton>
    </Devices>
  </TopStrip>
);

const Swatches = () => (
  <SwatchPanel>
    <SwatchArea>
      <SwatchRow>
        <RowName>Actual</RowName>
        {actualColors.map((c) => <Swatch key={c} $color={c} />)}
      </SwatchRow>
      <SwatchRow>
        <RowName>Target</RowName>
        {targetColors.map((c, i) => (
          <SwatchCell key={c}>
            <Swatch $color={c} />
            <SwatchLabel>{patches[i].name}</SwatchLabel>
          </SwatchCell>
        ))}
      </SwatchRow>
    </SwatchArea>
    <ScrollBar size={34} height={14} />
  </SwatchPanel>
);

const ReadingsTable = () => (
  <TableBox>
    <Table>
      <colgroup>
        <col style={{ width: 13 }} />
        <col style={{ width: 113 }} />
        {columns.map((c) => <col key={c.name} style={{ width: c.width }} />)}
      </colgroup>
      <thead>
        <tr>
          <th />
          <th />
          {columns.map((c) => <th key={c.name} scope="col">{c.name}</th>)}
        </tr>
      </thead>
      <tbody>
        {rowLabels.map((label, r) => (
          <tr key={label}>
            <td />
            <th scope="row">{label}</th>
            {columns.map((c) => <td key={c.name}>{c.values[r]}</td>)}
          </tr>
        ))}
      </tbody>
    </Table>
    <TableScroll><ScrollBar size={57} height={14} /></TableScroll>
  </TableBox>
);

const Bottom = () => (
  <BottomStrip>
    <PatchArea>
      <PatchRow>
        {patches.slice(0, 21).map((p) => (
          <PatchButton key={p.name}>
            <Chip $color={p.color} />
            <PatchName $wide={/Skin|Sky|Gray|Moderate/.test(p.name)}>{p.name.replace('Moderate ', 'Moderate\n')}</PatchName>
          </PatchButton>
        ))}
      </PatchRow>
      <ScrollBar size={86} height={13} />
    </PatchArea>
    <PatternColumn>
      <PatternButton aria-label="More patterns"><ControlIcon art={<path d="M5.5 12.5h9L10 7z" fill="#222" />} /></PatternButton>
      <PatternButton $tall aria-label="Pattern window"><PatternIcon /></PatternButton>
    </PatternColumn>
    <Controls>
      {controlIcons.map((c) => (
        <ControlButton key={c.label} aria-label={c.label} disabled={c.off}>
          <ControlIcon art={c.art} off={c.off} />
        </ControlButton>
      ))}
      <NavButton $side="left">
        <ControlIcon art={<path d="M10 5l-5 5 5 5M15 5l-5 5 5 5" fill="none" stroke="#222" strokeWidth="1.5" />} />
        Back
      </NavButton>
      <NavButton $side="right">
        Next
        <ControlIcon art={<path d="M5 5l5 5-5 5M10 5l5 5-5 5" fill="none" stroke="#222" strokeWidth="1.5" />} />
      </NavButton>
    </Controls>
  </BottomStrip>
);

const App = () => (
  <Window>
    <GlobalStyle />
    <TitleBar>
      <svg width="16" height="16" viewBox="0 0 16 16" aria-hidden="true">
        <rect width="16" height="16" fill="#063b06" />
        <rect x="2" y="1" width="12" height="14" fill="#0a6a0a" />
        <text x="4" y="13" fontFamily="Open Sans" fontSize="14" fontWeight="700" fill="#6dff5a">5</text>
      </svg>
      <WindowTitle>CalMAN 5 CalMAN Ultimate for Business 267 Days Remaining</WindowTitle>
      <WindowControls>
        <WindowButton aria-label="Minimize">
          <svg width="12" height="12" aria-hidden="true"><rect x="0.5" y="6.5" width="11" height="4" fill="#fff" stroke="#4b3a46" /></svg>
        </WindowButton>
        <WindowButton aria-label="Restore">
          <svg width="12" height="13" aria-hidden="true">
            <path d="M4 4V1.5h7V8H9" fill="none" stroke="#fff" strokeWidth="2" />
            <rect x="2" y="5" width="6" height="6" fill="none" stroke="#fff" strokeWidth="2" />
          </svg>
        </WindowButton>
        <WindowButton $close aria-label="Close">
          <svg width="12" height="12" aria-hidden="true">
            <path d="M2 2l8 8M10 2l-8 8" stroke="#4b3a46" strokeWidth="4" />
            <path d="M2 2l8 8M10 2l-8 8" stroke="#fff" strokeWidth="2.5" />
          </svg>
        </WindowButton>
      </WindowControls>
    </TitleBar>

    <Workspace>
      <SideBar />
      <Stage>
        <Toolbar />
        <Content>
          <Upper>
            <Summary>
              <PageTitle>ColorChecker</PageTitle>
              <Stats>
                <p>Avg dE2000: 9,92</p>
                <p>Max dE2000: 15,99</p>
              </Stats>
              <DeltaEChart />
            </Summary>
            <Middle>
              <DeltaRow>
                <DeltaChart title="DeltaL" titleX={76} width={160} left={22} right={146} barInset={13} max={4} step={1} value={3.98}
                  limits={[[3, '#107010'], [-3, '#107010']]} />
                <DeltaChart title="DeltaC" titleX={76} width={160} left={29} right={146} barInset={12} max={10} step={5} value={9.4}
                  limits={[[10, '#c84646'], [5, '#ffff00'], [3, '#107010'], [-3, '#107010'], [-5, '#ffff00'], [-10, '#c84646']]} />
                <DeltaChart title="DeltaH" titleX={81} width={170} left={29} right={157} barInset={13} max={20} step={5} value={17.8}
                  limits={[[10, '#ff0000'], [5, '#ffff00'], [3, '#107010'], [-3, '#107010'], [-5, '#ffff00'], [-10, '#ff0000']]} />
              </DeltaRow>
              <Swatches />
            </Middle>
            <CiePanel><CieChart /></CiePanel>
          </Upper>
          <Lower>
            <Reading>
              <ReadingTitle>Current Reading</ReadingTitle>
              <p>x: 0,2009</p>
              <p>y: 0,2256</p>
              <p>fL: 19,905</p>
              <p>cd/m²: 68,2</p>
            </Reading>
            <ReadingsTable />
          </Lower>
          <Bottom />
        </Content>
      </Stage>
    </Workspace>

    <Taskbar>
      <TaskSlot $width={54} $gap={8} aria-label="Start"><StartOrb /></TaskSlot>
      <TaskSlot $width={54} $gap={6} aria-label="Internet Explorer"><ExplorerE /></TaskSlot>
      <TaskSlot $width={58} $gap={4} $open aria-label="Explorer"><FolderIcon /></TaskSlot>
      <TaskSlot $width={56} $gap={6} aria-label="Media Player"><MediaIcon /></TaskSlot>
      <TaskSlot $width={58} $gap={4} $open $active aria-label="CalMAN"><CalmanIcon /></TaskSlot>
      <TaskSlot $width={58} $open aria-label="Paint"><PaintIcon /></TaskSlot>
      <Tray>
        <Language>DE</Language>
        <TrayIcons />
        <Clock>18:28<br />08.04.2015</Clock>
        <ShowDesktop aria-label="Show desktop" />
      </Tray>
    </Taskbar>
  </Window>
);

export default App;
